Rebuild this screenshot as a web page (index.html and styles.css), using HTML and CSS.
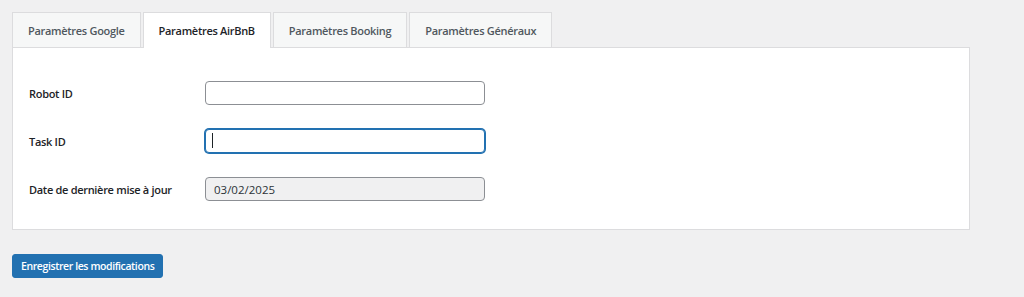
FILE: index.html
```html
<!DOCTYPE html>
<html lang="fr">
<head>
    <meta charset="UTF-8">
    <meta name="viewport" content="width=device-width, initial-scale=1.0">
    <title>Paramètres AirBnB</title>
    <link rel="stylesheet" href="styles.css">
</head>
<body>
    <div class="wrap">
        <nav class="tabs">
            <a class="tab" href="#">Paramètres Google</a>
            <a class="tab active" href="#">Paramètres AirBnB</a>
            <a class="tab" href="#">Paramètres Booking</a>
            <a class="tab" href="#">Paramètres Généraux</a>
        </nav>

        <form class="panel">
            <div class="row">
                <label for="robot-id">Robot ID</label>
                <input type="text" id="robot-id" class="field">
            </div>
            <div class="row">
                <label for="task-id">Task ID</label>
                <span class="field-wrap">
                    <input type="text" id="task-id" class="field focused">
                </span>
            </div>
            <div class="row">
                <label for="last-update">Date de dernière mise à jour</label>
                <input type="text" id="last-update" class="field readonly" value="03/02/2025" readonly>
            </div>
        </form>

        <button class="button-primary">Enregistrer les modifications</button>
    </div>
</body>
</html>
```

FILE: styles.css
```css
body {
    margin: 0;
    background-color: #f0f0f1;
    font-family: 'Open Sans', sans-serif;
    font-size: 11px;
    color: #1d2327;
}

.wrap {
    width: 958px;
    padding: 12px;
}

.tabs {
    display: flex;
    gap: 2px;
}

.tab {
    display: block;
    height: 34px;
    line-height: 36px;
    padding: 0 15px;
    border: 1px solid #dcdcde;
    border-bottom: none;
    background-color: #f6f7f7;
    color: #50575e;
    font-weight: 600;
    letter-spacing: -0.3px;
    text-decoration: none;
}

.tab.active {
    background-color: #fff;
    color: #1d2327;
    position: relative;
    z-index: 1;
    margin-bottom: -1px;
    height: 35px;
}

.panel {
    background-color: #fff;
    border: 1px solid #dcdcde;
    padding: 21px 16px 16px;
}

.row {
    display: flex;
    align-items: center;
    padding: 12px 0;
}

.row label {
    width: 176px;
    font-weight: 600;
    letter-spacing: -0.3px;
}

.field {
    box-sizing: border-box;
    width: 280px;
    height: 24px;
    margin: 0;
    padding: 0 8px;
    border: 1px solid #8c8f94;
    border-radius: 4px;
    background-color: #fff;
    font-family: inherit;
    font-size: 11.5px;
    color: #2c3338;
}

.field.focused {
    border-color: #2271b1;
    box-shadow: 0 0 0 1px #2271b1;
}

.field.readonly {
    background-color: #f0f0f1;
}

.field-wrap {
    position: relative;
    display: block;
    height: 24px;
}

.field-wrap::after {
    content: '';
    position: absolute;
    left: 7px;
    top: 4px;
    width: 1px;
    height: 15px;
    background-color: #1d2327;
}

.button-primary {
    display: block;
    margin-top: 24px;
    height: 24px;
    padding: 0 8px;
    border: 1px solid #2271b1;
    border-radius: 3px;
    background-color: #2271b1;
    color: #fff;
    font-family: inherit;
    font-size: 10.5px;
    font-weight: 600;
    letter-spacing: -0.4px;
    cursor: pointer;
}
```
